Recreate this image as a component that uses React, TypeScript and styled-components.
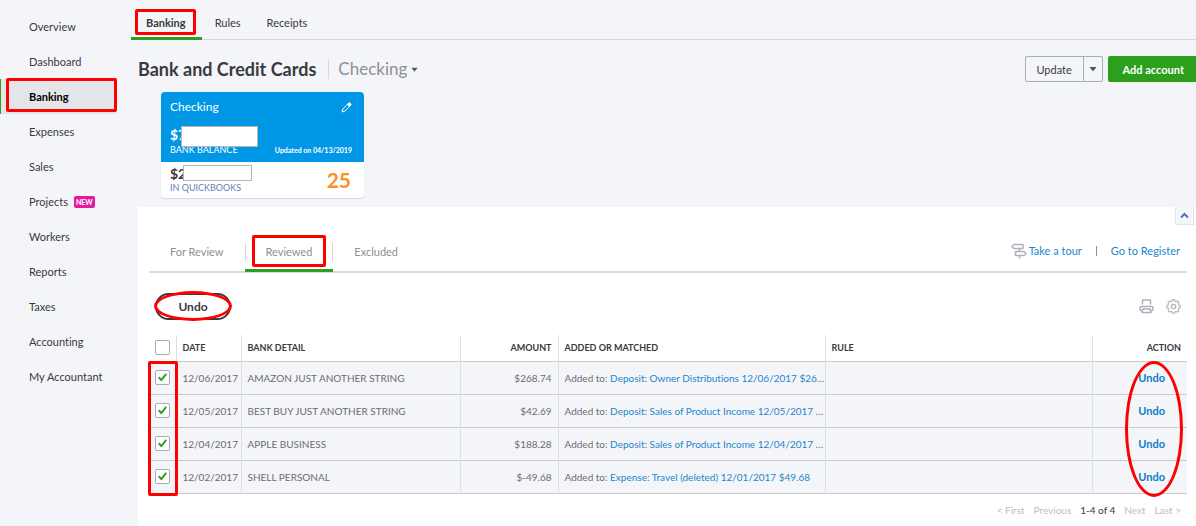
import React from 'react';
import styled, { createGlobalStyle } from 'styled-components';

const RED = '#ff0000';
const GREEN = '#2ca01c';
const BLUE = '#1c86cd';
const INK = '#393a3d';
const MUTED = '#8d9096';
const LINE = '#d4d7dc';

const GlobalStyle = createGlobalStyle`
  *, *::before, *::after { box-sizing: border-box; }
  body {
    margin: 0;
    background: #f4f5f8;
    color: ${INK};
    font-family: Lato, "Liberation Sans", sans-serif;
    font-size: 11px;
    font-variant-ligatures: none;
    line-height: 16px;
  }
  a { text-decoration: none; }
  button { font-family: inherit; cursor: pointer; }
  ul { list-style: none; margin: 0; padding: 0; }
`;

/* Red marker drawn over the control it points out. */
const Highlight = styled.span<{ $inset: string; $round?: boolean }>`
  position: absolute;
  inset: ${p => p.$inset};
  border: 3px solid ${RED};
  border-radius: ${p => (p.$round ? '50%' : '2px')};
  pointer-events: none;
`;

const CheckColumnMarker = styled(Highlight)`
  right: auto;
  width: 30px;
`;

const ActionColumnMarker = styled(Highlight)`
  left: auto;
  width: 58px;
`;

const Page = styled.div`
  display: grid;
  grid-template-columns: 131px minmax(0, 1fr);
  min-height: 100vh;
`;

const Sidebar = styled.nav`
  padding-top: 9px;
`;

const SideItem = styled.li<{ $active?: boolean }>`
  position: relative;
  margin-right: 14px;
  border-left: 1px solid ${p => (p.$active ? GREEN : 'transparent')};
  background: ${p => (p.$active ? '#e3e5e8' : 'transparent')};
  a {
    display: flex;
    align-items: center;
    gap: 6px;
    height: 35px;
    padding-left: 28px;
    color: ${p => (p.$active ? '#000' : INK)};
    font-weight: ${p => (p.$active ? 700 : 400)};
  }
`;

const NewBadge = styled.span`
  padding: 0 2px;
  border-radius: 2px;
  background: #e31c9e;
  color: #fff;
  font-size: 7px;
  font-weight: 700;
  line-height: 12px;
`;

const Main = styled.main`
  display: flex;
  flex-direction: column;
  min-width: 0;
`;

const TopTabs = styled.nav`
  display: flex;
  height: 40px;
  border-bottom: 1px solid ${LINE};
`;

const TopTab = styled.a<{ $active?: boolean }>`
  position: relative;
  display: flex;
  align-items: center;
  height: 40px;
  padding: ${p => (p.$active ? '9px 16px 0 15px' : '9px 13px 0')};
  border-bottom: 3px solid ${p => (p.$active ? GREEN : 'transparent')};
  color: ${INK};
  font-weight: ${p => (p.$active ? 700 : 400)};
`;

const Heading = styled.header`
  display: flex;
  align-items: center;
  height: 52px;
  padding: 6px 0 0 7px;
`;

const Title = styled.h1`
  margin: 0;
  font-size: 18px;
  line-height: 20px;
  font-weight: 700;
`;

const AccountPicker = styled.button`
  display: flex;
  align-items: center;
  gap: 4px;
  margin-left: 12px;
  padding: 0 0 0 9px;
  border: 0;
  border-left: 1px solid ${LINE};
  background: none;
  color: ${MUTED};
  font-size: 17px;
  line-height: 20px;
`;

const Actions = styled.div`
  display: flex;
  gap: 5px;
  margin-left: auto;
`;

const SplitButton = styled.div`
  display: flex;
  height: 26px;
  border: 1px solid #a9adb4;
  border-radius: 2px;
`;

const SplitPart = styled.button<{ $toggle?: boolean }>`
  display: flex;
  align-items: center;
  justify-content: center;
  width: ${p => (p.$toggle ? 19 : 57)}px;
  padding: 0;
  border: 0;
  border-left: ${p => (p.$toggle ? '1px solid #a9adb4' : '0')};
  background: none;
  color: ${INK};
  font-size: 11px;
`;

const AddButton = styled.button`
  height: 26px;
  padding: 0 12px 0 15px;
  border: 0;
  border-radius: 2px 0 0 2px;
  background: ${GREEN};
  color: #fff;
  font-size: 11px;
  font-weight: 700;
`;

const Card = styled.section`
  width: 203px;
  margin: 0 0 9px 30px;
  border-radius: 4px;
  background: #fff;
  box-shadow: 0 1px 1px ${LINE};
  overflow: hidden;
`;

const CardTop = styled.div`
  height: 70px;
  padding: 7px 12px 0 9px;
  background: #0097e6;
  color: #fff;
`;

const CardRow = styled.div<{ $gap?: number }>`
  display: flex;
  align-items: center;
  justify-content: space-between;
  margin-top: ${p => p.$gap ?? 0}px;
`;

const CardName = styled.h2`
  margin: 0;
  font-size: 12px;
  line-height: 16px;
  font-weight: 400;
`;

const IconButton = styled.button`
  display: flex;
  padding: 0;
  border: 0;
  background: none;
  color: inherit;
`;

const CardBottom = styled.div`
  display: flex;
  justify-content: space-between;
  align-items: center;
  height: 36px;
  padding: 0 13px 0 9px;
`;

const Money = styled.div`
  position: relative;
  font-size: 14px;
  line-height: 16px;
  font-weight: 700;
`;

/* White box that covers an account balance. */
const Redaction = styled.span<{ $left: number; $width: number; $height: number }>`
  position: absolute;
  left: ${p => p.$left}px;
  top: -1px;
  width: ${p => p.$width}px;
  height: ${p => p.$height}px;
  border: 1px solid #b5b5b5;
  background: #fff;
`;

const Caption = styled.div<{ $tone?: string }>`
  color: ${p => p.$tone ?? 'inherit'};
  font-size: 9px;
  line-height: 12px;
`;

const Updated = styled.div`
  font-size: 7px;
  font-weight: 700;
  line-height: 12px;
`;

const Count = styled.div`
  color: #ff8f24;
  font-size: 21px;
  line-height: 24px;
  font-weight: 700;
`;

const Panel = styled.section`
  position: relative;
  flex: 1;
  margin-left: 7px;
  padding: 28px 9px 0 11px;
  background: #fff;
`;

const Collapse = styled.button`
  position: absolute;
  top: 0;
  right: 2px;
  display: flex;
  align-items: center;
  justify-content: center;
  width: 19px;
  height: 18px;
  padding: 0;
  border: 1px solid #dfe6f0;
  border-top: 0;
  background: #f4f5f8;
`;

const PanelBar = styled.div`
  display: flex;
  height: 38px;
  border-bottom: 2px solid #dcdcdc;
`;

const PanelTab = styled.a<{ $active?: boolean }>`
  position: relative;
  display: flex;
  align-items: center;
  height: 37px;
  padding: 0 21px;
  border-bottom: 3px solid ${p => (p.$active ? GREEN : 'transparent')};
  color: ${MUTED};
  &::before, &::after {
    content: "";
    display: ${p => (p.$active ? 'block' : 'none')};
    position: absolute;
    top: 8px;
    left: 0;
    width: 1px;
    height: 18px;
    background: ${LINE};
  }
  &::after { left: auto; right: 0; }
`;

const PanelLinks = styled.div`
  display: flex;
  align-items: center;
  margin-left: auto;
  padding: 0 7px 5px 0;
`;

const PanelLink = styled.a`
  display: flex;
  align-items: center;
  gap: 2px;
  color: ${BLUE};
`;

const Separator = styled.span`
  width: 1px;
  height: 10px;
  margin: 0 14px;
  background: ${MUTED};
`;

const Toolbar = styled.div`
  display: flex;
  align-items: center;
  justify-content: space-between;
  height: 62px;
  padding: 5px 6px 0 6px;
`;

const UndoButton = styled.button`
  position: relative;
  width: 76px;
  height: 27px;
  padding: 0;
  border: 2px solid ${INK};
  border-radius: 14px;
  background: #fff;
  color: ${INK};
  font-size: 12px;
  font-weight: 700;
`;

const Tools = styled.div`
  display: flex;
  gap: 12px;
  color: #adb1ba;
`;

const TableWrap = styled.div`
  position: relative;
`;

const Table = styled.table`
  width: 100%;
  border-collapse: collapse;
  table-layout: fixed;
  tr { border-bottom: 1px solid #c8cacd; }
`;

const Col = styled.col<{ $width?: number }>`
  width: ${p => (p.$width ? `${p.$width}px` : 'auto')};
`;

const HeadCell = styled.th<{ $right?: boolean }>`
  height: 26px;
  padding: 0 6px;
  border-left: 1px solid #dcdfe4;
  font-size: 9px;
  line-height: 14px;
  text-align: ${p => (p.$right ? 'right' : 'left')};
  white-space: nowrap;
  &:first-child { border-left: 0; }
`;

const Cell = styled.td<{ $right?: boolean; $flush?: boolean }>`
  height: 33px;
  padding: ${p => (p.$flush ? '0 0 0 6px' : '0 6px')};
  border-left: 1px solid #dcdfe4;
  background: #f4f5f8;
  color: #6b6c72;
  font-size: 10px;
  line-height: 14px;
  text-align: ${p => (p.$right ? 'right' : 'left')};
  white-space: nowrap;
  &:first-child { border-left: 0; }
`;

const MatchLink = styled.a`
  color: ${BLUE};
`;

const RowUndo = styled.button`
  padding: 0 16px 0 0;
  border: 0;
  background: none;
  color: #0f7cc8;
  font-size: 11px;
  line-height: 14px;
  font-weight: 700;
`;

const Check = styled.input`
  display: block;
  appearance: none;
  width: 15px;
  height: 15px;
  margin: 0;
  border: 1px solid #a9acb1;
  border-radius: 2px;
  background: #fff;
  &:checked::before {
    content: "";
    display: block;
    width: 9px;
    height: 9px;
    margin: 2px;
    background: ${GREEN};
    clip-path: polygon(0 55%, 16% 40%, 36% 62%, 84% 4%, 100% 16%, 38% 94%);
  }
`;

const Pager = styled.nav`
  display: flex;
  justify-content: flex-end;
  gap: 9px;
  padding: 9px 6px 0 0;
  font-size: 10px;
  line-height: 14px;
`;

const PageButton = styled.button`
  padding: 0;
  border: 0;
  background: none;
  color: #babec5;
  font-size: 10px;
  line-height: 14px;
`;

const Caret = ({ size }: { size: number }) => (
  <svg width={size} height={size} viewBox="0 0 8 8" aria-hidden="true">
    <path d="M0.5 2h7L4 6.5z" fill="#55565b" />
  </svg>
);

const PencilIcon = () => (
  <svg width="11" height="11" viewBox="0 0 11 11" fill="none" stroke="currentColor" strokeWidth="1" strokeLinejoin="round" aria-hidden="true">
    <path d="M1 10l.8-3L7.2 1.5q1.2-1 2.1 0t0 2.1L3.9 9.1z" />
    <path d="M6.3 2.4l2.2 2.2 1-1.1q.7-1.1-.2-2-1-.8-2 .1z" fill="currentColor" />
  </svg>
);

const SignpostIcon = () => (
  <svg width="16" height="16" viewBox="0 0 16 16" fill="none" stroke="#adb1ba" strokeWidth="1.5" strokeLinejoin="round" aria-hidden="true">
    <path d="M3 1.5h9v4H3L1 3.5z" />
    <path d="M4.5 8.5h8.500l2 2-2 2H4.5z" />
    <path d="M8.5 5.5v3M8.5 12.500v3" />
  </svg>
);

const PrinterIcon = () => (
  <svg width="15" height="15" viewBox="0 0 15 15" fill="none" stroke="currentColor" strokeWidth="1.5" strokeLinejoin="round" aria-hidden="true">
    <path d="M3.5 5.5V1h8v4.5" />
    <path d="M3.5 11.500H2q-1 0-1-1V9q0-1.500 1.500-1.500h10Q14 7.500 14 9v1.500q0 1-1 1h-1.500" />
    <path d="M4 10h7l1 3.600H3z" />
  </svg>
);

const GEAR_TEETH = [0, 45, 90, 135, 180, 225, 270, 315];

const GearIcon = () => (
  <svg width="15" height="15" viewBox="0 0 15 15" fill="none" stroke="currentColor" strokeWidth="1.2" strokeLinejoin="round" aria-hidden="true">
    <circle cx="7.5" cy="7.5" r="2.2" />
    {GEAR_TEETH.map(angle => (
      <path
        key={angle}
        d="M5.510 2.700Q6 2.300 6.100 1.500Q6.200.7 7.500.7T8.900 1.500Q9 2.300 9.490 2.700"
        transform={`rotate(${angle} 7.5 7.5)`}
      />
    ))}
  </svg>
);

const ChevronUp = () => (
  <svg width="9" height="7" viewBox="0 0 9 7" fill="none" stroke="#4a73c0" strokeWidth="2" aria-hidden="true">
    <path d="M1 5.5l3.5-3.5L8 5.5" />
  </svg>
);

const sideItems = [
  'Overview', 'Dashboard', 'Banking', 'Expenses', 'Sales', 'Projects',
  'Workers', 'Reports', 'Taxes', 'Accounting', 'My Accountant',
];

const rows = [
  { date: '12/06/2017', detail: 'AMAZON JUST ANOTHER STRING', amount: '$268.74', match: 'Deposit: Owner Distributions 12/06/2017 $26', more: '…' },
  { date: '12/05/2017', detail: 'BEST BUY JUST ANOTHER STRING', amount: '$42.69', match: 'Deposit: Sales of Product Income 12/05/2017', more: ' …' },
  { date: '12/04/2017', detail: 'APPLE BUSINESS', amount: '$188.28', match: 'Deposit: Sales of Product Income 12/04/2017', more: ' …' },
  { date: '12/02/2017', detail: 'SHELL PERSONAL', amount: '$-49.68', match: 'Expense: Travel (deleted) 12/01/2017 $49.68', more: '' },
];

export default function App() {
  return (
    <>
      <GlobalStyle />
      <Page>
        <Sidebar>
          <ul>
            {sideItems.map(name => (
              <SideItem key={name} $active={name === 'Banking'}>
                <a href="#">
                  {name}
                  {name === 'Projects' && <NewBadge>NEW</NewBadge>}
                </a>
                {name === 'Banking' && <Highlight $inset="-1px 0 2px 5px" />}
              </SideItem>
            ))}
          </ul>
        </Sidebar>
        <Main>
          <TopTabs>
            <TopTab href="#" $active>
              Banking
              <Highlight $inset="9px 6px 2px 4px" />
            </TopTab>
            <TopTab href="#">Rules</TopTab>
            <TopTab href="#">Receipts</TopTab>
          </TopTabs>
          <Heading>
            <Title>Bank and Credit Cards</Title>
            <AccountPicker>
              Checking
              <Caret size={7} />
            </AccountPicker>
            <Actions>
              <SplitButton>
                <SplitPart>Update</SplitPart>
                <SplitPart $toggle aria-label="More update options"><Caret size={8} /></SplitPart>
              </SplitButton>
              <AddButton>Add account</AddButton>
            </Actions>
          </Heading>
          <Card>
            <CardTop>
              <CardRow>
                <CardName>Checking</CardName>
                <IconButton aria-label="Edit account"><PencilIcon /></IconButton>
              </CardRow>
              <CardRow $gap={12}>
                <Money>$7<Redaction $left={11} $width={77} $height={21} /></Money>
              </CardRow>
              <CardRow $gap={1}>
                <Caption>BANK BALANCE</Caption>
                <Updated>Updated on 04/13/2019</Updated>
              </CardRow>
            </CardTop>
            <CardBottom>
              <div>
                <Money>$2<Redaction $left={13} $width={69} $height={16} /></Money>
                <Caption $tone="#6083b5">IN QUICKBOOKS</Caption>
              </div>
              <Count>25</Count>
            </CardBottom>
          </Card>
          <Panel>
            <Collapse aria-label="Collapse"><ChevronUp /></Collapse>
            <PanelBar>
              <PanelTab href="#">For Review</PanelTab>
              <PanelTab href="#" $active>
                Reviewed
                <Highlight $inset="0 7px 2px 7px" />
              </PanelTab>
              <PanelTab href="#">Excluded</PanelTab>
              <PanelLinks>
                <PanelLink href="#"><SignpostIcon />Take a tour</PanelLink>
                <Separator />
                <PanelLink href="#">Go to Register</PanelLink>
              </PanelLinks>
            </PanelBar>
            <Toolbar>
              <UndoButton>
                Undo
                <Highlight $round $inset="-4px -3px -3px -3px" />
              </UndoButton>
              <Tools>
                <IconButton aria-label="Print"><PrinterIcon /></IconButton>
                <IconButton aria-label="Settings"><GearIcon /></IconButton>
              </Tools>
            </Toolbar>
            <TableWrap>
              <Table>
                <colgroup>
                  <Col $width={27} />
                  <Col $width={65} />
                  <Col />
                  <Col $width={98} />
                  <Col $width={267} />
                  <Col $width={267} />
                  <Col $width={95} />
                </colgroup>
                <thead>
                  <tr>
                    <HeadCell><Check type="checkbox" aria-label="Select all" /></HeadCell>
                    <HeadCell>DATE</HeadCell>
                    <HeadCell>BANK DETAIL</HeadCell>
                    <HeadCell $right>AMOUNT</HeadCell>
                    <HeadCell>ADDED OR MATCHED</HeadCell>
                    <HeadCell>RULE</HeadCell>
                    <HeadCell $right>ACTION</HeadCell>
                  </tr>
                </thead>
                <tbody>
                  {rows.map(row => (
                    <tr key={row.date}>
                      <Cell><Check type="checkbox" defaultChecked aria-label={`Select ${row.detail}`} /></Cell>
                      <Cell $flush>{row.date}</Cell>
                      <Cell>{row.detail}</Cell>
                      <Cell $right>{row.amount}</Cell>
                      <Cell $flush>Added to: <MatchLink href="#">{row.match}</MatchLink>{row.more}</Cell>
                      <Cell />
                      <Cell $right><RowUndo>Undo</RowUndo></Cell>
                    </tr>
                  ))}
                </tbody>
              </Table>
              <CheckColumnMarker $inset="26px auto -2px -1px" />
              <ActionColumnMarker $round $inset="26px 4px -3px auto" />
            </TableWrap>
            <Pager>
              <PageButton>&lt; First</PageButton>
              <PageButton>Previous</PageButton>
              <span>1-4 of 4</span>
              <PageButton>Next</PageButton>
              <PageButton>Last &gt;</PageButton>
            </Pager>
          </Panel>
        </Main>
      </Page>
    </>
  );
}
